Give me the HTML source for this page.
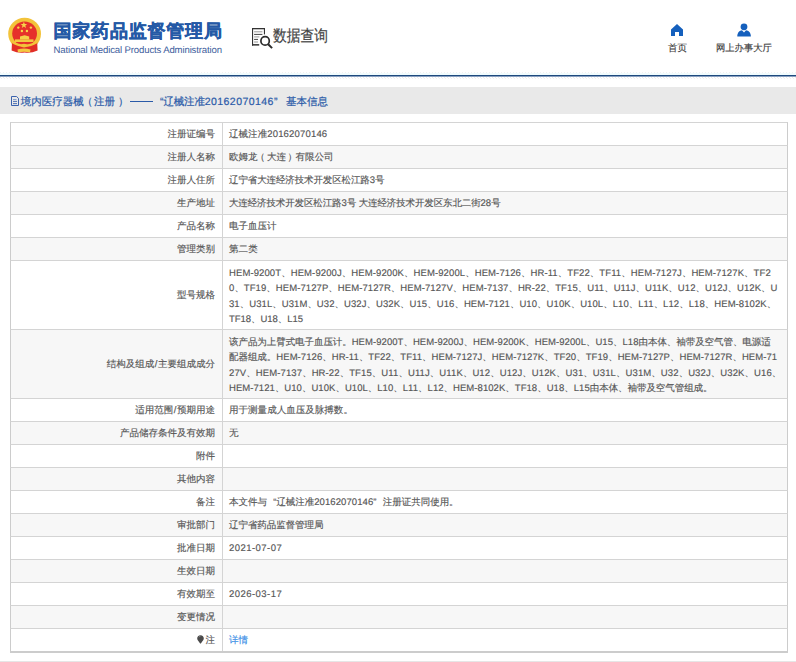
<!DOCTYPE html>
<html><head><meta charset="utf-8">
<style>
*{margin:0;padding:0;box-sizing:border-box}
html,body{width:796px;height:662px;overflow:hidden;background:#fff}
body{position:relative;font-family:"Liberation Sans",sans-serif;text-rendering:geometricPrecision;color:#444}
.abs{position:absolute}
#tbl{position:absolute;left:0;top:0;width:796px;height:662px}
.row{position:absolute;left:10px;width:778px;border-top:1px solid #d4d4d4;border-left:1px solid #cccccc;border-right:1px solid #cccccc}
.row.g{background:#f7f7f7}
.lab{position:absolute;left:0;width:212px;top:0;bottom:0;border-right:1px solid #d4d4d4;padding-right:7px;font-size:9.5px;color:#555;-webkit-text-stroke:0.15px #555;white-space:nowrap;display:flex;align-items:center;justify-content:flex-end}
.val{position:absolute;left:218px;top:0;bottom:0;font-size:9.5px;color:#555;-webkit-text-stroke:0.15px #555;white-space:nowrap;display:flex;align-items:center}
.ml{line-height:15.3px;display:block;padding-top:3px}
.l{letter-spacing:calc(var(--ls,0px) + 0.12px)}
.tb{top:93.7px;font-size:10.5px;color:#2a5aa8;-webkit-text-stroke:0.2px #2a5aa8;white-space:nowrap;line-height:16px}
.q1{display:inline-block;width:9.5px;text-align:right}
.q2{display:inline-block;width:9.5px;text-align:left}
</style></head><body>

<!-- header -->
<svg class="abs" style="left:0;top:0" width="50" height="60" viewBox="0 0 50 60">
  <ellipse cx="24.6" cy="33.8" rx="16.4" ry="16" fill="#f3c33a"/>
  <ellipse cx="24.6" cy="33.6" rx="12.4" ry="12.2" fill="#e6302b"/>
  <polygon points="23.9,21.8 24.8,24.1 27.2,24.1 25.3,25.6 26,28 23.9,26.5 21.8,28 22.5,25.6 20.6,24.1 23,24.1" fill="#f6d44a"/>
  <circle cx="18.3" cy="27.6" r="1.2" fill="#f6d44a"/>
  <circle cx="21.9" cy="31" r="1.2" fill="#f6d44a"/>
  <circle cx="26.9" cy="31" r="1.2" fill="#f6d44a"/>
  <circle cx="30.9" cy="27.6" r="1.2" fill="#f6d44a"/>
  <path d="M20 36.5 L24.6 35.2 L29.2 36.5 L29.2 39.6 L20 39.6 Z" fill="#f5cf4a"/>
  <rect x="15" y="39.4" width="18.5" height="2.6" fill="#f3c840"/>
  <path d="M12 42 Q24.6 47 37.2 42 L37.6 50.5 Q31 53.5 24.6 52.5 Q18 53.5 11.6 50.5 Z" fill="#e12e27"/>
  <path d="M11 40 Q24.6 49 38.2 40 L37.5 43 Q24.6 51 11.7 43 Z" fill="#f3c33a"/>
  <ellipse cx="24" cy="45.6" rx="3" ry="1.8" fill="#f3c33a"/>
  <path d="M17.5 49.5 Q24 47.5 30.5 49.5 L30 52.3 Q24 51 18 52.3 Z" fill="#f3c840"/>
</svg>
<div class="abs" style="left:53.5px;top:21px;font-size:18px;font-weight:bold;letter-spacing:0.8px;color:#2459a6;-webkit-text-stroke:0.35px #2459a6;white-space:nowrap;line-height:20px">国家药品监督管理局</div>
<div class="abs" style="left:53.5px;top:44.5px;font-size:9.6px;letter-spacing:-0.15px;color:#3d5d9c;white-space:nowrap;line-height:12px">National Medical Products Administration</div>

<svg class="abs" style="left:248px;top:24px" width="28" height="28" viewBox="0 0 28 28">
  <rect x="4" y="4" width="13" height="1.3" fill="#333"/>
  <rect x="4" y="4" width="1.1" height="17.6" fill="#333"/>
  <rect x="15.9" y="4" width="1.1" height="6.4" fill="#333"/>
  <rect x="4" y="20.1" width="7.2" height="1.5" fill="#333"/>
  <rect x="6.1" y="7.3" width="8.3" height="1" fill="#999"/>
  <rect x="6.1" y="9.9" width="8.3" height="1" fill="#444"/>
  <rect x="6.1" y="12.4" width="5.3" height="1" fill="#999"/>
  <rect x="6.1" y="14.9" width="3.9" height="1" fill="#444"/>
  <rect x="6.1" y="17.5" width="3.9" height="1" fill="#999"/>
  <circle cx="17.1" cy="16.9" r="4.2" fill="none" stroke="#2b2b2b" stroke-width="1.7"/>
  <path d="M20.2 20.2 L24.1 24.1" stroke="#2b2b2b" stroke-width="2"/>
</svg>
<div class="abs" style="left:273px;top:27.3px;font-size:16px;color:#444;white-space:nowrap;line-height:20px;transform:scaleX(0.86);transform-origin:0 0;-webkit-text-stroke:0.2px #444">数据查询</div>

<svg class="abs" style="left:670px;top:23px" width="14" height="14" viewBox="0 0 14 14">
  <path d="M7 1 L13 6.5 V13 H9 V9 H5 V13 H1 V6.5 Z" fill="#1560bd"/>
</svg>
<div class="abs" style="left:668px;top:43.1px;font-size:9.5px;color:#3a3a3a;-webkit-text-stroke:0.15px #3a3a3a;white-space:nowrap;line-height:12px">首页</div>

<svg class="abs" style="left:736px;top:22px" width="16" height="16" viewBox="0 0 16 16">
  <circle cx="8" cy="4.8" r="3.4" fill="#1560bd"/>
  <path d="M1.3 14.6 C1.3 10.5 3.5 8.6 6 8.3 L8 10.4 L10 8.3 C12.5 8.6 14.9 10.5 14.9 14.6 Z" fill="#1560bd"/>
</svg>
<div class="abs" style="left:716px;top:42px;font-size:9.3px;color:#3a3a3a;-webkit-text-stroke:0.15px #3a3a3a;white-space:nowrap;line-height:12px">网上办事大厅</div>

<!-- blue line + dotted -->
<div class="abs" style="left:0;top:72px;width:796px;height:1px;background:repeating-linear-gradient(90deg,#f2f2f2 0 1px,#fff 1px 3px)"></div>
<div class="abs" style="left:0;top:73px;width:796px;height:2px;background:#f1fcfe"></div>
<div class="abs" style="left:0;top:75px;width:796px;height:1px;background:#1e4a7e"></div>
<div class="abs" style="left:0;top:76px;width:796px;height:0.5px;background:#8aa0c0"></div>
<div class="abs" style="left:0;top:77px;width:796px;height:1px;background:repeating-linear-gradient(90deg,#ececec 0 1px,#fff 1px 3px)"></div>
<div class="abs" style="left:1px;top:78px;width:795px;height:1px;background:repeating-linear-gradient(90deg,#f0f0f0 0 1px,#fff 1px 3px)"></div>

<!-- title bar -->
<div class="abs" style="left:0;top:87px;width:796px;height:27px;background:#e9e9e9"></div>
<svg class="abs" style="left:11px;top:96px" width="8" height="10" viewBox="0 0 8 10">
  <path d="M0.5 0.5 H5.6 L7.5 2.4 V9.5 H0.5 Z" fill="none" stroke="#3a62ad" stroke-width="1"/>
  <rect x="2" y="3.1" width="3.5" height="0.9" fill="#7d98c8"/>
  <rect x="2" y="4.9" width="4" height="0.9" fill="#3a62ad"/>
  <rect x="2" y="7.2" width="4" height="0.9" fill="#3a62ad"/>
</svg>
<div class="abs tb" style="left:20.8px">境内医疗器械<span style="margin-left:-1.5px;margin-right:1.3px">（</span>注册<span style="margin-left:2.8px">）</span></div>
<div class="abs" style="left:130px;top:100.5px;width:23.2px;height:1.3px;background:#2a5aa8"></div>
<div class="abs tb" style="left:156px"><span class="q1" style="width:7.5px;text-align:right">“</span><span style="letter-spacing:-0.2px">辽械注准</span><span style="letter-spacing:0.45px">20162070146</span><span class="q2" style="width:9.5px">”</span></div>
<div class="abs tb" style="left:286px">基本信息</div>

<!-- table -->
<!--TBL--><div id="tbl">
<div class="row" style="top:122px;height:23px"><div class="lab">注册证编号</div><div class="val"><span style="--ls:0.057px;letter-spacing:var(--ls)">辽械注准<span class="l">20162070146</span></span></div></div>
<div class="row g" style="top:145px;height:23px"><div class="lab">注册人名称</div><div class="val"><span style="--ls:0.000px;letter-spacing:var(--ls)">欧姆龙<span style="margin-left:-2px;margin-right:2px">（</span>大连<span style="margin-left:1.5px;margin-right:-1.5px">）</span>有限公司</span></div></div>
<div class="row" style="top:168px;height:23px"><div class="lab">注册人住所</div><div class="val"><span style="--ls:-0.124px;letter-spacing:var(--ls)">辽宁省大连经济技术开发区松江路<span class="l">3</span>号</span></div></div>
<div class="row g" style="top:191px;height:23px"><div class="lab">生产地址</div><div class="val"><span style="--ls:-0.130px;letter-spacing:var(--ls)">大连经济技术开发区松江路<span class="l">3</span>号<span class="l"> </span>大连经济技术开发区东北二街<span class="l">28</span>号</span></div></div>
<div class="row" style="top:214px;height:23px"><div class="lab">产品名称</div><div class="val"><span style="--ls:0.000px;letter-spacing:var(--ls)">电子血压计</span></div></div>
<div class="row g" style="top:237px;height:23px"><div class="lab">管理类别</div><div class="val"><span style="--ls:0.100px;letter-spacing:var(--ls)">第二类</span></div></div>
<div class="row" style="top:260px;height:69px"><div class="lab">型号规格</div><div class="val"><div class="ml"><div style="--ls:-0.013px;letter-spacing:var(--ls)"><span class="l">HEM-9200T</span>、<span class="l">HEM-9200J</span>、<span class="l">HEM-9200K</span>、<span class="l">HEM-9200L</span>、<span class="l">HEM-7126</span>、<span class="l">HR-11</span>、<span class="l">TF22</span>、<span class="l">TF11</span>、<span class="l">HEM-7127J</span>、<span class="l">HEM-7127K</span>、<span class="l">TF2</span></div><div style="--ls:-0.035px;letter-spacing:var(--ls)"><span class="l">0</span>、<span class="l">TF19</span>、<span class="l">HEM-7127P</span>、<span class="l">HEM-7127R</span>、<span class="l">HEM-7127V</span>、<span class="l">HEM-7137</span>、<span class="l">HR-22</span>、<span class="l">TF15</span>、<span class="l">U11</span>、<span class="l">U11J</span>、<span class="l">U11K</span>、<span class="l">U12</span>、<span class="l">U12J</span>、<span class="l">U12K</span>、<span class="l">U</span></div><div style="--ls:-0.038px;letter-spacing:var(--ls)"><span class="l">31</span>、<span class="l">U31L</span>、<span class="l">U31M</span>、<span class="l">U32</span>、<span class="l">U32J</span>、<span class="l">U32K</span>、<span class="l">U15</span>、<span class="l">U16</span>、<span class="l">HEM-7121</span>、<span class="l">U10</span>、<span class="l">U10K</span>、<span class="l">U10L</span>、<span class="l">L10</span>、<span class="l">L11</span>、<span class="l">L12</span>、<span class="l">L18</span>、<span class="l">HEM-8102K</span>、</div><div style="--ls:-0.145px;letter-spacing:var(--ls)"><span class="l">TF18</span>、<span class="l">U18</span>、<span class="l">L15</span></div></div></div></div>
<div class="row g" style="top:329px;height:69px"><div class="lab">结构及组成<span style="margin:0 0.5px">/</span>主要组成成分</div><div class="val"><div class="ml"><div style="--ls:-0.062px;letter-spacing:var(--ls)">该产品为上臂式电子血压计。<span class="l">HEM-9200T</span>、<span class="l">HEM-9200J</span>、<span class="l">HEM-9200K</span>、<span class="l">HEM-9200L</span>、<span class="l">U15</span>、<span class="l">L18</span>由本体、袖带及空气管、电源适</div><div style="--ls:-0.046px;letter-spacing:var(--ls)">配器组成。<span class="l">HEM-7126</span>、<span class="l">HR-11</span>、<span class="l">TF22</span>、<span class="l">TF11</span>、<span class="l">HEM-7127J</span>、<span class="l">HEM-7127K</span>、<span class="l">TF20</span>、<span class="l">TF19</span>、<span class="l">HEM-7127P</span>、<span class="l">HEM-7127R</span>、<span class="l">HEM-71</span></div><div style="--ls:-0.003px;letter-spacing:var(--ls)"><span class="l">27V</span>、<span class="l">HEM-7137</span>、<span class="l">HR-22</span>、<span class="l">TF15</span>、<span class="l">U11</span>、<span class="l">U11J</span>、<span class="l">U11K</span>、<span class="l">U12</span>、<span class="l">U12J</span>、<span class="l">U12K</span>、<span class="l">U31</span>、<span class="l">U31L</span>、<span class="l">U31M</span>、<span class="l">U32</span>、<span class="l">U32J</span>、<span class="l">U32K</span>、<span class="l">U16</span>、</div><div style="--ls:-0.060px;letter-spacing:var(--ls)"><span class="l">HEM-7121</span>、<span class="l">U10</span>、<span class="l">U10K</span>、<span class="l">U10L</span>、<span class="l">L10</span>、<span class="l">L11</span>、<span class="l">L12</span>、<span class="l">HEM-8102K</span>、<span class="l">TF18</span>、<span class="l">U18</span>、<span class="l">L15</span>由本体、袖带及空气管组成。</div></div></div></div>
<div class="row" style="top:398px;height:23px"><div class="lab">适用范围<span style="margin:0 0.5px">/</span>预期用途</div><div class="val"><span style="--ls:0.033px;letter-spacing:var(--ls)">用于测量成人血压及脉搏数。</span></div></div>
<div class="row g" style="top:421px;height:23px"><div class="lab">产品储存条件及有效期</div><div class="val"><span style="--ls:0.000px;letter-spacing:var(--ls)">无</span></div></div>
<div class="row" style="top:444px;height:23px"><div class="lab">附件</div><div class="val"><span style="--ls:0.000px;letter-spacing:var(--ls)"></span></div></div>
<div class="row g" style="top:467px;height:23px"><div class="lab">其他内容</div><div class="val"><span style="--ls:0.000px;letter-spacing:var(--ls)"></span></div></div>
<div class="row" style="top:490px;height:23px"><div class="lab">备注</div><div class="val"><span style="--ls:-0.033px;letter-spacing:var(--ls)">本文件与<span class="q1">“</span>辽械注准<span class="l">20162070146</span><span class="q2">”</span>注册证共同使用。</span></div></div>
<div class="row g" style="top:513px;height:23px"><div class="lab">审批部门</div><div class="val"><span style="--ls:-0.055px;letter-spacing:var(--ls)">辽宁省药品监督管理局</span></div></div>
<div class="row" style="top:536px;height:23px"><div class="lab">批准日期</div><div class="val"><span style="--ls:0.345px;letter-spacing:var(--ls)"><span class="l">2021-07-07</span></span></div></div>
<div class="row g" style="top:559px;height:23px"><div class="lab">生效日期</div><div class="val"><span style="--ls:0.000px;letter-spacing:var(--ls)"></span></div></div>
<div class="row" style="top:582px;height:23px"><div class="lab">有效期至</div><div class="val"><span style="--ls:0.345px;letter-spacing:var(--ls)"><span class="l">2026-03-17</span></span></div></div>
<div class="row g" style="top:605px;height:23px"><div class="lab">变更情况</div><div class="val"><span style="--ls:0.000px;letter-spacing:var(--ls)"></span></div></div>
<div class="row" style="top:628px;height:23px"><div class="lab"><svg width="7" height="9" viewBox="0 0 7 9" style="margin-right:1.5px;position:relative;top:-0.5px;-webkit-text-stroke:0"><path d="M3.5 0.3 C5.6 0.3 6.8 1.8 6.8 3.6 C6.8 5.3 5.2 6.3 3.9 8.6 H3.1 C1.8 6.3 0.2 5.3 0.2 3.6 C0.2 1.8 1.4 0.3 3.5 0.3 Z" fill="#4a4a4a"/><path d="M2 2.2 Q2.5 1.3 3.4 1.2" stroke="#aaa" stroke-width="0.7" fill="none"/></svg>注</div><div class="val"><a style="color:#3a8ee6;-webkit-text-stroke:0.15px #3a8ee6;text-decoration:none">详情</a></div></div>
</div><!--/TBL-->
<div class="abs" style="left:10px;top:651px;width:778px;height:2px;background:#cccccc"></div>
<div class="abs" style="left:0;top:661px;width:796px;height:1px;background:#e6e6e6"></div>
</body></html>
